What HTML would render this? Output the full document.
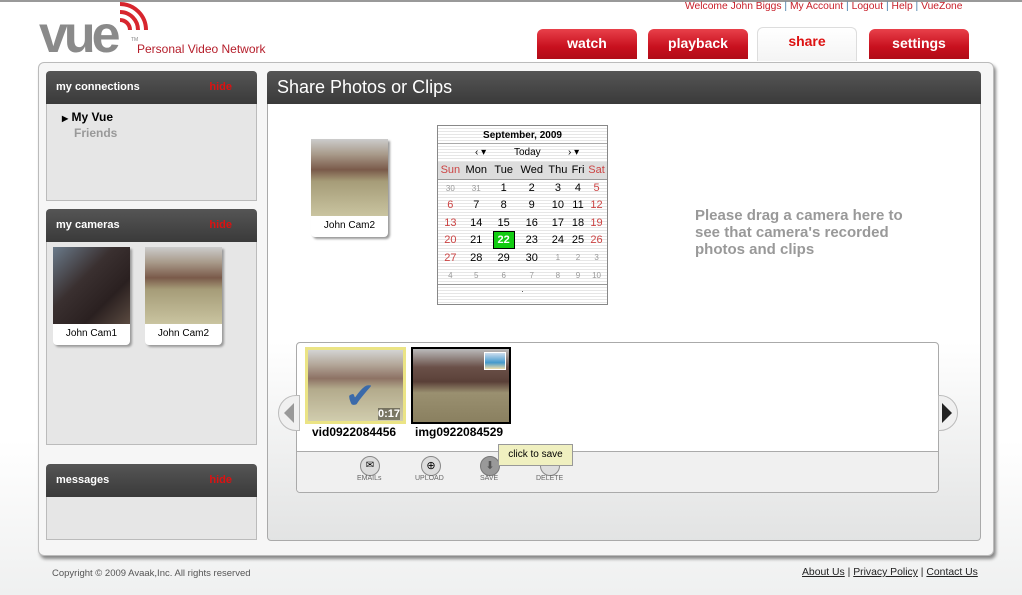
<!DOCTYPE html>
<html><head><meta charset="utf-8"><style>
*{margin:0;padding:0;box-sizing:border-box}
body{width:1022px;height:595px;position:relative;overflow:hidden;font-family:"Liberation Sans",Arial,sans-serif;background:linear-gradient(#fff 0,#fff 440px,#eff0f0 595px)}
.a{position:absolute}
.tab{position:absolute;top:29px;width:100px;height:30px;border-radius:6px 6px 0 0;background:linear-gradient(#e8404a,#c8101e 60%,#b00c18);color:#fff;font-weight:bold;font-size:14px;text-align:center;line-height:28px}
.ph{position:absolute;background:linear-gradient(#555,#3a3a3a);border-radius:4px 4px 0 0;color:#fff;font-weight:bold;font-size:11px}
.hide{position:absolute;right:25px;top:10px;color:#d11;font-size:11px;font-weight:bold}
.pb{position:absolute;background:#e6e6e6;border:1px solid #bbb;border-top:none}
.cam{position:absolute;background:#fff;box-shadow:2px 2px 2px #999;border-radius:0 0 4px 4px;font-size:10px;text-align:center}
.pic{background:linear-gradient(#ccc 0,#a89a8a 20%,#7a5a4a 40%,#a69c78 55%,#c9c4a0 100%)}
.cal td{text-align:center;font-size:11px;height:17.3px;padding:0}
.r{color:#c44}.g{color:#999;font-size:8px!important}
.lbl{position:absolute;top:475px;font-size:7px;color:#666}
</style></head><body>
<div class="a" style="left:0;top:0;width:1022px;height:2px;background:#999"></div>
<div class="a" style="left:39px;top:10px;font-size:52px;font-weight:bold;color:#8a8a8a;letter-spacing:-4px;line-height:50px">vue</div>
<svg class="a" style="left:112px;top:0" width="45" height="45" viewBox="0 0 45 45"><g fill="none" stroke="#d7262e" stroke-width="4"><path d="M8 20a10 10 0 0 1 10 10"/><path d="M8 12a18 18 0 0 1 18 18"/><path d="M8 4a26 26 0 0 1 26 26"/></g></svg>
<div class="a" style="left:131px;top:37px;font-size:5px;color:#888">TM</div>
<div class="a" style="left:137px;top:42px;font-size:12px;color:#b51d2a">Personal Video Network</div>
<div class="a" style="left:685px;top:1px;font-size:10.3px;color:#c8202a;white-space:nowrap">Welcome John Biggs <span style="color:#4a7ca8">|</span> My Account <span style="color:#4a7ca8">|</span> Logout <span style="color:#4a7ca8">|</span> Help <span style="color:#4a7ca8">|</span> VueZone</div>
<div class="tab" style="left:537px">watch</div>
<div class="tab" style="left:648px">playback</div>
<div class="tab" style="left:757px;background:linear-gradient(#fff,#f4f4f4);border:1px solid #ddd;border-bottom:none;color:#d11;line-height:26px;top:27px;height:34px">share</div>
<div class="tab" style="left:869px">settings</div>
<div class="a" style="left:38px;top:62px;width:956px;height:494px;background:#f6f6f6;border:1px solid #bbb;border-radius:6px;box-shadow:2px 3px 3px #888"></div>
<div class="ph" style="left:46px;top:71px;width:211px;height:33px;padding:10px"><span>my connections</span><span class="hide">hide</span></div>
<div class="pb" style="left:46px;top:104px;width:211px;height:97px"></div>
<div class="a" style="left:62px;top:110px;font-size:12px;font-weight:bold;line-height:14px"><span style="font-size:8px">▶</span> My Vue<br><span style="color:#999;margin-left:12px">Friends</span></div>
<div class="ph" style="left:46px;top:209px;width:211px;height:33px;padding:10px"><span>my cameras</span><span class="hide">hide</span></div>
<div class="pb" style="left:46px;top:242px;width:211px;height:203px"></div>
<div class="cam" style="left:53px;top:247px;width:77px;height:98px"><div style="height:77px;background:linear-gradient(135deg,#6a7a8a,#3a3030 40%,#2a2020 70%,#5a4a40)"></div><div style="padding-top:4px">John Cam1</div></div>
<div class="cam" style="left:145px;top:247px;width:77px;height:98px"><div class="pic" style="height:77px"></div><div style="padding-top:4px">John Cam2</div></div>
<div class="ph" style="left:46px;top:464px;width:211px;height:33px;padding:10px"><span>messages</span><span class="hide">hide</span></div>
<div class="pb" style="left:46px;top:497px;width:211px;height:43px"></div>
<div class="a" style="left:267px;top:71px;width:714px;height:470px;border:1px solid #aaa;border-radius:4px;background:linear-gradient(#fff 0,#fff 270px,#e2e3e3 470px)"></div>
<div class="ph" style="left:267px;top:71px;width:714px;height:33px;font-size:18px;font-weight:normal;padding:6px 10px">Share Photos or Clips</div>
<div class="cam" style="left:311px;top:139px;width:77px;height:98px"><div class="pic" style="height:77px"></div><div style="padding-top:4px">John Cam2</div></div>
<div class="a" style="left:437px;top:125px;width:171px;height:180px;border:1px solid #888;background:repeating-linear-gradient(#fff 0,#fff 2px,#e6e6e6 2px,#e6e6e6 3px)">
<div style="text-align:center;font-size:10px;font-weight:bold;height:18px;line-height:19px;border-bottom:1px solid #aaa">September, 2009</div>
<div style="font-size:10px;height:18px;line-height:18px;position:relative"><span class="a" style="left:37px">‹ ▾</span><span class="a" style="left:76px">Today</span><span class="a" style="left:130px">› ▾</span></div>
<table class="cal" style="width:169px;border-collapse:collapse">
<tr style="background:#ddd;border-bottom:1px solid #999"><td class="r">Sun</td><td>Mon</td><td>Tue</td><td>Wed</td><td>Thu</td><td>Fri</td><td class="r">Sat</td></tr>
<tr><td class="g r">30</td><td class="g">31</td><td>1</td><td>2</td><td>3</td><td>4</td><td class="r">5</td></tr>
<tr><td class="r">6</td><td>7</td><td>8</td><td>9</td><td>10</td><td>11</td><td class="r">12</td></tr>
<tr><td class="r">13</td><td>14</td><td>15</td><td>16</td><td>17</td><td>18</td><td class="r">19</td></tr>
<tr><td class="r">20</td><td>21</td><td><span style="display:inline-block;background:#1c1;border:1px solid #000;color:#fff;font-weight:bold;width:22px;line-height:16px">22</span></td><td>23</td><td>24</td><td>25</td><td class="r">26</td></tr>
<tr><td class="r">27</td><td>28</td><td>29</td><td>30</td><td class="g">1</td><td class="g">2</td><td class="g r">3</td></tr>
<tr><td class="g r">4</td><td class="g">5</td><td class="g">6</td><td class="g">7</td><td class="g">8</td><td class="g">9</td><td class="g r">10</td></tr>
</table>
<div style="border-top:1px solid #999;text-align:center;font-size:8px">.</div>
</div>
<div class="a" style="left:695px;top:207px;font-size:15px;font-weight:bold;color:#999;line-height:17px">Please drag a camera here to<br>see that camera's recorded<br>photos and clips</div>
<div class="a" style="left:296px;top:342px;width:643px;height:151px;border:1px solid #aaa;border-radius:4px;background:#fff;overflow:hidden">
<div class="a" style="left:0;top:108px;width:643px;height:43px;background:#f0f0f0;border-top:1px solid #aaa"></div>
</div>
<div class="a" style="left:278px;top:395px;width:22px;height:36px;border-radius:18px 0 0 18px;background:#f0f0f0;border:1px solid #bbb"></div>
<div class="a" style="left:284px;top:403px;width:0;height:0;border:10px solid transparent;border-right:10px solid #999;border-left:0"></div>
<div class="a" style="left:938px;top:395px;width:20px;height:36px;border-radius:0 18px 18px 0;background:#f0f0f0;border:1px solid #bbb"></div>
<div class="a" style="left:942px;top:403px;width:0;height:0;border:10px solid transparent;border-left:10px solid #222;border-right:0"></div>
<div class="a pic" style="left:305px;top:347px;width:101px;height:77px;border:3px solid #e8e070;opacity:.85"></div>
<div class="a" style="left:378px;top:408px;font-size:11px;color:#fff;background:rgba(0,0,0,.4);font-weight:bold">0:17</div>
<div class="a" style="left:345px;top:375px;font-size:36px;color:#3a6aaa">✔</div>
<div class="a" style="left:411px;top:347px;width:100px;height:77px;border:2px solid #000;background:linear-gradient(#bbb 0,#6a5048 25%,#5a4038 45%,#9a9070 60%,#8a8060 100%)"></div>
<div class="a" style="left:484px;top:352px;width:22px;height:18px;background:linear-gradient(#cde,#49c 60%,#eda);border:1px solid #fff"></div>
<div class="a" style="left:312px;top:425px;font-size:12px;font-weight:bold">vid0922084456</div>
<div class="a" style="left:415px;top:425px;font-size:12px;font-weight:bold">img0922084529</div>
<div class="a" style="left:360px;top:456px;width:20px;height:20px;border-radius:50%;background:#ddd;border:1px solid #888;font-size:10px;text-align:center;line-height:18px">✉</div>
<div class="a" style="left:421px;top:456px;width:20px;height:20px;border-radius:50%;background:#ddd;border:1px solid #888;font-size:11px;text-align:center;line-height:18px">⊕</div>
<div class="a" style="left:480px;top:456px;width:20px;height:20px;border-radius:50%;background:#999;border:1px solid #777;color:#555;font-size:11px;text-align:center;line-height:18px">⬇</div>
<div class="a" style="left:540px;top:456px;width:20px;height:20px;border-radius:50%;background:#ddd;border:1px solid #888"></div>
<div class="lbl" style="left:357px">EMAILs</div>
<div class="lbl" style="left:415px">UPLOAD</div>
<div class="lbl" style="left:480px">SAVE</div>
<div class="lbl" style="left:536px">DELETE</div>
<div class="a" style="left:498px;top:444px;width:75px;height:22px;background:#f0f0c0;border:1px solid #999;font-size:10px;line-height:20px;text-align:center">click to save</div>
<div class="a" style="left:52px;top:568px;font-size:9.5px;color:#555">Copyright © 2009 Avaak,Inc. All rights reserved</div>
<div class="a" style="left:802px;top:567px;font-size:10.4px;color:#222;white-space:nowrap"><u>About Us</u> | <u>Privacy Policy</u> | <u>Contact Us</u></div>
</body></html>
